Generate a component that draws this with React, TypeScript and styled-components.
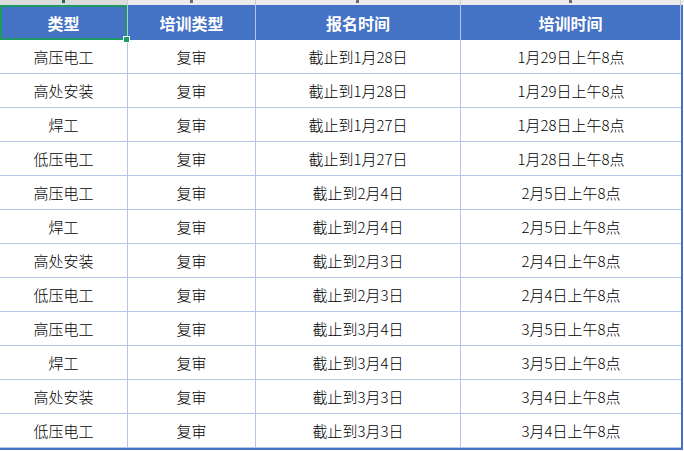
import React from 'react';
import styled, { createGlobalStyle } from 'styled-components';

const GlobalStyle = createGlobalStyle`
  html, body {
    margin: 0;
    padding: 0;
    background: #ffffff;
  }
  body {
    font-family: "Noto Sans CJK SC", "Liberation Sans", sans-serif;
  }
`;

const columns = ['128px', '128px', '205px', '220px'];
const heads = ['类型', '培训类型', '报名时间', '培训时间'];

const rows: string[][] = [
  ['高压电工', '复审', '截止到1月28日', '1月29日上午8点'],
  ['高处安装', '复审', '截止到1月28日', '1月29日上午8点'],
  ['焊工', '复审', '截止到1月27日', '1月28日上午8点'],
  ['低压电工', '复审', '截止到1月27日', '1月28日上午8点'],
  ['高压电工', '复审', '截止到2月4日', '2月5日上午8点'],
  ['焊工', '复审', '截止到2月4日', '2月5日上午8点'],
  ['高处安装', '复审', '截止到2月3日', '2月4日上午8点'],
  ['低压电工', '复审', '截止到2月3日', '2月4日上午8点'],
  ['高压电工', '复审', '截止到3月4日', '3月5日上午8点'],
  ['焊工', '复审', '截止到3月4日', '3月5日上午8点'],
  ['高处安装', '复审', '截止到3月3日', '3月4日上午8点'],
  ['低压电工', '复审', '截止到3月3日', '3月4日上午8点'],
];

const Sheet = styled.div`
  width: 684px;
  height: 451px;
  overflow: hidden;
  background: #ffffff;
`;

const ColumnStrip = styled.div`
  display: grid;
  grid-template-columns: ${columns.join(' ')} 1fr;
  height: 5px;
  background: #ececec;
`;

const StripCell = styled.div<{ $active?: boolean }>`
  position: relative;
  border-right: 1px solid #cfcfcf;
  background: ${(p) => (p.$active ? '#dcdcdc' : '#ececec')};

  &::after {
    content: '';
    position: absolute;
    left: 50%;
    top: 0;
    width: 3px;
    height: 3px;
    margin-left: -2px;
    background: ${(p) => (p.$active ? '#217346' : '#6b6b6b')};
  }
`;

const Grid = styled.div`
  display: grid;
  grid-template-columns: ${columns.join(' ')};
  width: 681px;
  border-right: 2px solid #4472c4;
  border-bottom: 2px solid #4472c4;
`;

const HeadCell = styled.div<{ $selected?: boolean }>`
  position: relative;
  height: 35px;
  display: flex;
  align-items: center;
  justify-content: center;
  background: #4472c4;
  color: #ffffff;
  font-size: 16px;
  font-weight: 700;
  box-sizing: border-box;
  border-right: 1px solid #b4c6e7;
  box-shadow: ${(p) => (p.$selected ? 'inset 0 0 0 2px #1f9a66' : 'none')};

  &:last-child {
    border-right: none;
  }
`;

const Handle = styled.span`
  position: absolute;
  right: -3px;
  bottom: -3px;
  width: 5px;
  height: 5px;
  background: #1f9a66;
  border: 1px solid #ffffff;
  z-index: 2;
`;

const Cell = styled.div`
  height: 34px;
  box-sizing: border-box;
  display: flex;
  align-items: center;
  justify-content: center;
  color: #000000;
  font-size: 15px;
  font-weight: 300;
  border-right: 1px solid #b4c6e7;
  border-bottom: 1px solid #b4c6e7;

  &:nth-child(4n) {
    border-right: none;
  }
`;

const Body = styled.div`
  display: contents;
`;

export default function App() {
  return (
    <Sheet>
      <GlobalStyle />
      <ColumnStrip>
        {columns.map((_, i) => (
          <StripCell key={i} $active={i === 0} />
        ))}
        <div />
      </ColumnStrip>
      <Grid>
        {heads.map((h, i) => (
          <HeadCell key={h} $selected={i === 0}>
            {h}
            {i === 0 && <Handle />}
          </HeadCell>
        ))}
        <Body>
          {rows.flatMap((r, ri) =>
            r.map((c, ci) => <Cell key={`${ri}-${ci}`}>{c}</Cell>)
          )}
        </Body>
      </Grid>
    </Sheet>
  );
}
